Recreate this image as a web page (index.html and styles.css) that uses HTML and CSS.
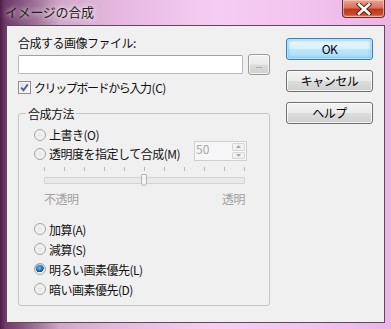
FILE: index.html
```html
<!DOCTYPE html>
<html lang="ja">
<head>
    <meta charset="UTF-8">
    <title>イメージの合成</title>
    <link rel="stylesheet" href="styles.css">
</head>
<body>

<div class="window">
    <!-- Title bar -->
    <div class="titlebar">
        <span class="title">イメージの合成</span>
        <button class="close-btn">
            <svg width="16" height="12" viewBox="0 0 16 12">
                <path d="M3 1.5 L13 10.5 M13 1.5 L3 10.5" stroke="#5a1a10" stroke-width="4.4" stroke-linecap="square"/>
                <path d="M3 1.5 L13 10.5 M13 1.5 L3 10.5" stroke="#ffffff" stroke-width="2.6" stroke-linecap="square"/>
            </svg>
        </button>
    </div>

    <div class="client">
        <div class="main">
            <div class="text-line">合成する画像ファイル:</div>

            <div class="file-row">
                <input type="text" class="file-input">
                <button class="btn browse-btn">...</button>
            </div>

            <div class="check-row">
                <span class="checkbox">
                    <svg width="9" height="9" viewBox="0 0 9 9">
                        <path d="M1.2 4.6 L3.5 7.2 L7.8 1.4" fill="none" stroke="#4a5e95" stroke-width="1.8"/>
                    </svg>
                </span>
                <span class="tight">クリップボードから入力</span>(C)
            </div>

            <!-- Blend method group -->
            <fieldset class="group">
                <legend>合成方法</legend>

                <div class="radio-row first">
                    <span class="radio"></span>上書き(O)
                </div>
                <div class="opacity-row">
                    <div class="radio-row">
                        <span class="radio"></span>透明度を指定して合成(M)
                    </div>
                    <div class="spin">
                        <span class="spin-value">50</span>
                        <span class="spin-buttons">
                            <span class="spin-btn">
                                <svg width="5" height="3" viewBox="0 0 5 3"><path d="M0 3 L2.5 0 L5 3 Z" fill="#a8a8a8"/></svg>
                            </span>
                            <span class="spin-btn">
                                <svg width="5" height="3" viewBox="0 0 5 3"><path d="M0 0 L2.5 3 L5 0 Z" fill="#a8a8a8"/></svg>
                            </span>
                        </span>
                    </div>
                </div>

                <div class="slider">
                    <div class="ticks">
                        <span></span><span></span><span></span><span></span><span></span><span></span>
                        <span></span><span></span><span></span><span></span><span></span>
                    </div>
                    <div class="track">
                        <span class="thumb"></span>
                    </div>
                    <div class="slider-labels">
                        <span>不透明</span>
                        <span>透明</span>
                    </div>
                </div>

                <div class="radio-list">
                    <div class="radio-row"><span class="radio"></span>加算(A)</div>
                    <div class="radio-row"><span class="radio"></span>減算(S)</div>
                    <div class="radio-row"><span class="radio checked"></span>明るい画素優先(L)</div>
                    <div class="radio-row"><span class="radio"></span>暗い画素優先(D)</div>
                </div>
            </fieldset>
        </div>

        <!-- Dialog buttons -->
        <div class="side">
            <button class="btn side-btn default">OK</button>
            <button class="btn side-btn">キャンセル</button>
            <button class="btn side-btn">ヘルプ</button>
        </div>
    </div>
</div>

</body>
</html>
```

FILE: styles.css
```css
/* General Styles */
body {
    margin: 0;
    font-family: "Noto Sans CJK JP", "Noto Sans", sans-serif;
    font-size: 12px;
    letter-spacing: -0.5px;
    color: #111;
}

.window {
    width: 391px;
    height: 329px;
    display: flex;
    flex-direction: column;
    background:
        linear-gradient(to right, #4e1d48 0px, #6e3866 5px, rgba(200, 150, 190, 0) 60px),
        linear-gradient(to right, #b996b2 0%, #e6b8df 30%, #f6cdf2 55%, #f2c2ee 80%, #eab4e6 100%);
}

/* Title bar */
.titlebar {
    height: 25px;
    display: flex;
    justify-content: space-between;
    align-items: flex-start;
    padding: 0 6px 0 5px;
}

.title {
    margin-top: 4px;
    font-size: 13px;
    letter-spacing: -0.3px;
    line-height: 15px;
    color: #1e1e1e;
    text-shadow: 0 0 5px rgba(255, 255, 255, 0.9), 0 0 8px rgba(255, 255, 255, 0.7);
}

.close-btn {
    width: 43px;
    height: 18px;
    padding: 0;
    border: 1px solid #6a2a2a;
    border-top: none;
    border-radius: 0 0 4px 4px;
    background: linear-gradient(to bottom, #e8a496 0%, #d9725e 45%, #c0381c 55%, #c74a2c 85%, #e0907a 100%);
    box-shadow: inset 0 0 0 1px rgba(255, 210, 200, 0.6);
    display: flex;
    justify-content: center;
    align-items: center;
}

/* Client area */
.client {
    flex: 1;
    margin: 0 6px 6px 6px;
    border: 1px solid #5f4a5c;
    background-color: #f0f0f0;
    display: flex;
}

.main {
    width: 252px;
    margin-left: 11px;
    padding-top: 9px;
}

.text-line {
    line-height: 15px;
}

.file-row {
    margin-top: 4px;
    display: flex;
    align-items: flex-start;
    gap: 5px;
}

.file-input {
    box-sizing: border-box;
    width: 225px;
    height: 19px;
    margin: 1px 0 0 0;
    border: 1px solid #b5b9c0;
    border-top-color: #9ea3ab;
    border-radius: 2px;
    background: #fff;
}

.btn {
    box-sizing: border-box;
    padding: 0;
    font-family: inherit;
    font-size: 12px;
    letter-spacing: -0.5px;
    color: #000;
    border: 1px solid #707070;
    border-radius: 3px;
    background: linear-gradient(to bottom, #f2f2f2 0%, #ebebeb 48%, #dddddd 52%, #cfcfcf 100%);
    box-shadow: inset 0 0 0 1px rgba(255, 255, 255, 0.75);
}

.browse-btn {
    width: 22px;
    height: 21px;
    border-color: #9a9a9a;
    font-size: 8px;
    line-height: 14px;
    color: #777;
    letter-spacing: 0;
}

.check-row {
    margin-top: 5px;
    display: flex;
    align-items: center;
    height: 15px;
    line-height: 15px;
}

.check-row .tight {
    letter-spacing: -1.4px;
    margin-right: 1px;
}

.checkbox {
    box-sizing: border-box;
    width: 13px;
    height: 13px;
    margin-right: 3px;
    border: 1px solid #8e8f8f;
    background: linear-gradient(135deg, #dcdcdc, #ffffff);
    box-shadow: inset 0 0 0 1px #f4f4f4;
    display: flex;
    justify-content: center;
    align-items: center;
}

/* Group box */
.group {
    margin: 11px 0 0 0;
    padding: 0 0 7px 0;
    height: 200px;
    box-sizing: border-box;
    border: 1px solid #c6c6c6;
    border-radius: 3px;
}

.group legend {
    margin-left: 7px;
    padding: 0 2px;
    line-height: 15px;
}

.radio-row {
    display: flex;
    align-items: center;
    height: 15px;
    line-height: 15px;
    padding-left: 15px;
}

.radio-row.first {
    margin-top: 6px;
}

.radio {
    box-sizing: border-box;
    width: 12px;
    height: 12px;
    margin-right: 3px;
    border-radius: 50%;
    border: 1px solid #a4a4a4;
    background: radial-gradient(circle at 50% 50%, #e4e4e4 0%, #f6f6f6 60%, #ffffff 100%);
    box-shadow: inset 0 0 1px 1px #ececec;
}

.radio.checked {
    background:
        radial-gradient(circle at 45% 40%, #6ec0f0 0%, #2a7fc4 30%, #0d4a86 50%, transparent 55%),
        radial-gradient(circle, #e8e8e8 0%, #ffffff 100%);
}

.opacity-row {
    display: flex;
    align-items: flex-end;
    height: 20px;
    margin-top: -1px;
}

.spin {
    box-sizing: border-box;
    width: 53px;
    height: 20px;
    margin-left: 14px;
    border: 1px solid #cfcfcf;
    background: #f7f7f7;
    display: flex;
    justify-content: space-between;
}

.spin-value {
    padding-left: 1px;
    line-height: 14px;
    color: #a6a6a6;
    letter-spacing: 0;
}

.spin-buttons {
    display: flex;
    flex-direction: column;
    gap: 1px;
    padding: 1px;
}

.spin-btn {
    box-sizing: border-box;
    width: 13px;
    height: 8px;
    border: 1px solid #d6d6d6;
    border-radius: 1px;
    background: #f2f2f2;
    display: flex;
    justify-content: center;
    align-items: center;
}

/* Slider (disabled) */
.slider {
    width: 201px;
    margin: 6px 0 0 25px;
}

.ticks {
    display: flex;
    justify-content: space-between;
    height: 4px;
}

.ticks span {
    width: 1px;
    background: #b8b8b8;
}

.track {
    position: relative;
    box-sizing: border-box;
    height: 7px;
    margin-top: 6px;
    border: 1px solid #d2d2d2;
    border-radius: 1px;
    background: #e9e9e9;
}

.thumb {
    position: absolute;
    left: 96px;
    top: -4px;
    box-sizing: border-box;
    width: 6px;
    height: 12px;
    border: 1px solid #b4b4b4;
    border-radius: 1px 1px 3px 3px;
    background: #f4f4f4;
}

.slider-labels {
    display: flex;
    justify-content: space-between;
    margin-top: 7px;
    line-height: 15px;
    color: #a0a0a0;
}

.radio-list {
    margin-top: 13px;
}

.radio-list .radio-row {
    height: 20px;
}

/* Right-hand buttons */
.side {
    margin-left: 16px;
    padding-top: 12px;
    display: flex;
    flex-direction: column;
    gap: 10px;
}

.side-btn {
    width: 87px;
    height: 22px;
    line-height: 18px;
}

.side-btn.default {
    border-color: #3c7fb1;
    background: linear-gradient(to bottom, #eaf6fd 0%, #d9f0fc 48%, #bee6fd 52%, #a7d9f5 100%);
    box-shadow: inset 0 0 0 1px #b6e3fb, inset 0 0 2px 2px rgba(92, 190, 240, 0.5);
}
```
